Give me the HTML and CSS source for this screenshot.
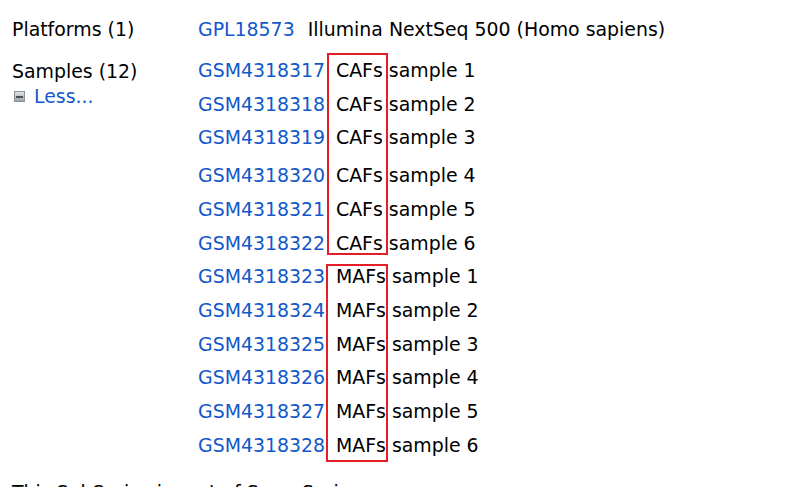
FILE: index.html
```html
<!DOCTYPE html>
<html>
<head>
<meta charset="utf-8">
<link rel="stylesheet" href="styles.css">
</head>
<body>
<div class="page">
  <div class="label">Platforms (1)</div>
  <div class="value">
    <div class="item"><a class="acc" href="#">GPL18573</a><span class="desc">Illumina NextSeq 500 (Homo sapiens)</span></div>
  </div>

  <div class="label">
    <div>Samples (12)</div>
    <div class="less"><svg class="minus" width="11" height="11" viewBox="0 0 11 11"><defs><linearGradient id="g" x1="0" y1="0" x2="0" y2="1"><stop offset="0" stop-color="#e4e6ea"/><stop offset="1" stop-color="#9aa0a8"/></linearGradient></defs><rect x="0.5" y="0.5" width="10" height="10" fill="url(#g)" stroke="#8c929a"/><rect x="2" y="5" width="7" height="2" fill="#4a5058"/></svg><a href="#">Less...</a></div>
  </div>
  <div class="value samples">
    <div class="item"><a class="acc" href="#">GSM4318317</a><span class="desc">CAFs sample 1</span></div>
    <div class="item"><a class="acc" href="#">GSM4318318</a><span class="desc">CAFs sample 2</span></div>
    <div class="item"><a class="acc" href="#">GSM4318319</a><span class="desc">CAFs sample 3</span></div>
    <div class="item shift"><a class="acc" href="#">GSM4318320</a><span class="desc">CAFs sample 4</span></div>
    <div class="item"><a class="acc" href="#">GSM4318321</a><span class="desc">CAFs sample 5</span></div>
    <div class="item"><a class="acc" href="#">GSM4318322</a><span class="desc">CAFs sample 6</span></div>
    <div class="item"><a class="acc" href="#">GSM4318323</a><span class="desc">MAFs sample 1</span></div>
    <div class="item"><a class="acc" href="#">GSM4318324</a><span class="desc">MAFs sample 2</span></div>
    <div class="item"><a class="acc" href="#">GSM4318325</a><span class="desc">MAFs sample 3</span></div>
    <div class="item"><a class="acc" href="#">GSM4318326</a><span class="desc">MAFs sample 4</span></div>
    <div class="item"><a class="acc" href="#">GSM4318327</a><span class="desc">MAFs sample 5</span></div>
    <div class="item"><a class="acc" href="#">GSM4318328</a><span class="desc">MAFs sample 6</span></div>
    <div class="mark mark-caf"></div>
    <div class="mark mark-maf"></div>
  </div>

  <div class="footer">This SubSeries is part of SuperSeries:</div>
</div>
</body>
</html>
```
FILE: styles.css
```css
html, body {
  margin: 0;
  padding: 0;
  background: #fff;
}
body {
  font-family: "DejaVu Sans", Verdana, sans-serif;
  font-size: 18.9px;
  color: #000;
  overflow: hidden;
}
a {
  color: #1358c9;
  text-decoration: none;
}
.page {
  display: grid;
  grid-template-columns: 186px 1fr;
  row-gap: 8px;
  padding: 12px 0 0 12px;
}
.label {
  line-height: 34px;
}
.less {
  display: flex;
  align-items: center;
  gap: 9px;
  line-height: 24px;
  margin-top: -4px;
  padding-left: 2px;
}
.minus {
  display: block;
  margin-top: 1px;
}
.value {
  line-height: 34px;
}
.samples {
  position: relative;
  line-height: 33.7px;
}
.item {
  display: flex;
  gap: 13px;
  white-space: nowrap;
}
.samples .item {
  gap: 0;
}
.samples .acc {
  width: 138px;
}
.shift {
  margin-top: 4px;
}
.mark {
  position: absolute;
  border: 2px solid #e41e26;
  box-sizing: border-box;
}
.mark-caf {
  left: 129px;
  top: -1px;
  width: 61px;
  height: 202px;
}
.mark-maf {
  left: 128px;
  top: 210px;
  width: 62px;
  height: 198px;
}
.footer {
  grid-column: 1 / 3;
  line-height: 34px;
  margin-top: 5px;
}
```
